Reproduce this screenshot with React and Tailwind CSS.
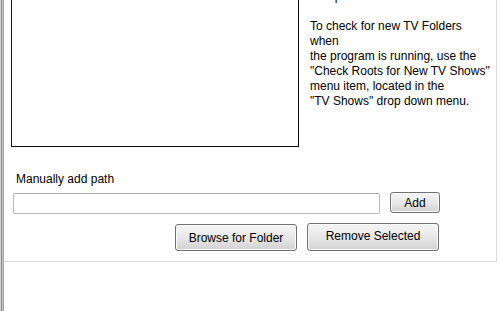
import React from 'react';

const helpLines = [
  'Setup',
  '',
  'To check for new TV Folders',
  'when',
  'the program is running, use the',
  '"Check Roots for New TV Shows"',
  'menu item, located in the',
  '"TV Shows" drop down menu.',
];

function WinButton({ className, children }) {
  return (
    <button
      className={`border border-[#707070] rounded-[3px] bg-gradient-to-b from-[#f4f4f4] via-[#e8e8e8] to-[#d2d2d2] text-[12px] text-black leading-none shadow-[inset_0_0_0_1px_#fbfbfb] ${className}`}
    >
      {children}
    </button>
  );
}

export default function App() {
  return (
    <div className="w-[501px] h-[311px] bg-white flex overflow-hidden font-['Liberation_Sans',Arial,sans-serif] text-black">
      {/* left frame edge */}
      <div className="flex h-full">
        <div className="w-px bg-[#d4d4d4]" />
        <div className="w-px bg-[#8a8a8a]" />
        <div className="w-px bg-[#c8c8c8]" />
        <div className="w-px bg-[#a4a4a4]" />
      </div>

      <div className="flex flex-col">
        <div className="w-[493px] h-[262px] border-r border-b border-[#dcdcdc] flex flex-col">
          <div className="flex h-[147px]">
            <div className="ml-[7px] w-[288px] h-[147px] border-x border-b border-[#111]" />
            <div className="ml-[11px] -mt-[11px] text-[12px] leading-[15px]">
              {helpLines.map((l, i) => (
                <div key={i} className="h-[15px] whitespace-nowrap">{l}</div>
              ))}
            </div>
          </div>

          <div className="mt-[25px] ml-[12px] text-[12px] leading-[15px] h-[15px]">Manually add path</div>

          <div className="mt-[6px] flex items-start h-[21px]">
            <div className="ml-[9px] w-[367px] h-[21px] border border-[#b8b8b8] border-t-[#a6a6a6] rounded-[2px] bg-white" />
            <WinButton className="ml-[10px] -mt-px w-[50px] h-[21px]">Add</WinButton>
          </div>

          <div className="mt-[9px] flex items-end h-[28px]">
            <WinButton className="ml-[171px] w-[122px] h-[27px]">Browse for Folder</WinButton>
            <WinButton className="ml-[10px] w-[132px] h-[28px] pb-[3px]">Remove Selected</WinButton>
          </div>
        </div>
      </div>
    </div>
  );
}
